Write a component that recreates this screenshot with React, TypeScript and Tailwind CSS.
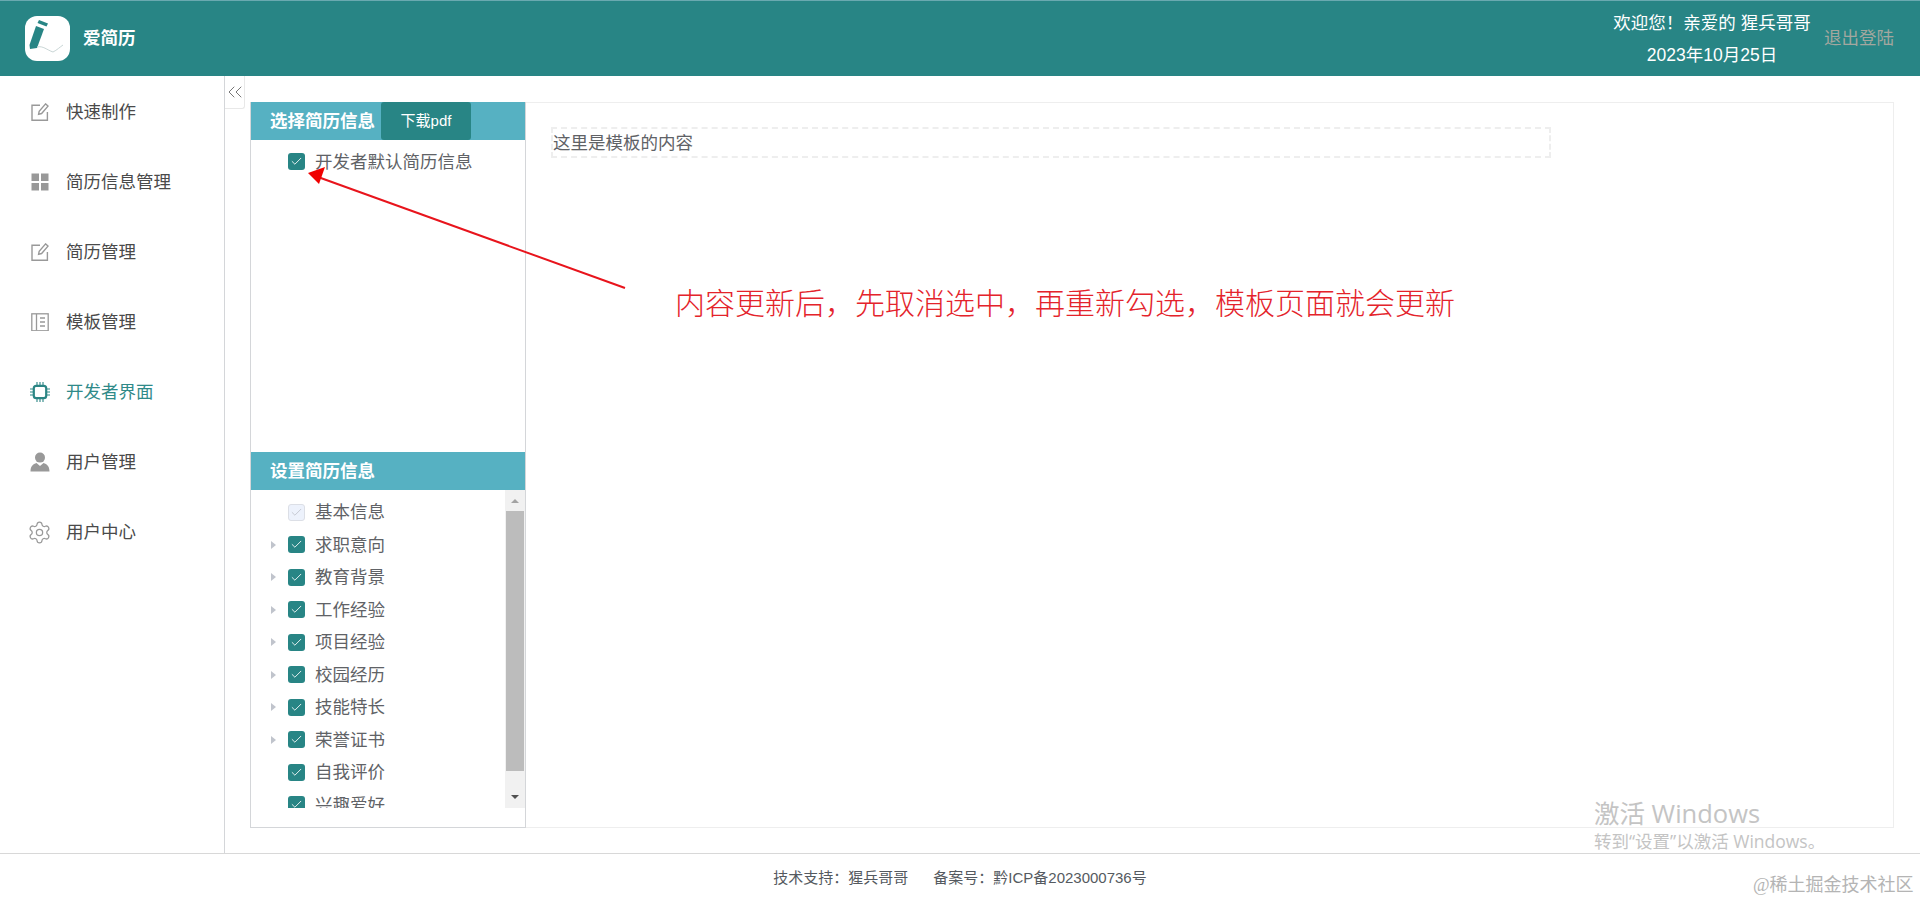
import { Settings, ChevronsLeft, Check } from "lucide-react";

const font = { sans: "font-['Liberation_Sans','Noto_Sans_CJK_SC',sans-serif]" };

const EditIcon = () => (
  <svg width="18" height="18" viewBox="0 0 18 18" fill="none" stroke="#999" strokeWidth="1.4">
    <path d="M9 2.2H1v15h15.4V9" />
    <path d="M7.6 11.2l.6-3L14.6.9l2.4 2.2-6.4 7.4z" />
  </svg>
);

const GridIcon = () => (
  <svg width="18" height="18" viewBox="0 0 18 18" fill="#999">
    <rect x="0.5" y="0.5" width="7.5" height="7.5" />
    <rect x="10" y="0.5" width="7.5" height="7.5" />
    <rect x="0.5" y="10" width="7.5" height="7.5" />
    <rect x="10" y="10" width="7.5" height="7.5" />
  </svg>
);

const BookIcon = () => (
  <svg width="18" height="18" viewBox="0 0 18 18" fill="none" stroke="#999" strokeWidth="1.3">
    <rect x="0.8" y="0.8" width="16.4" height="17" />
    <path d="M5.5 1v16.5M9 5h5M9 9h5M9 13h5" />
  </svg>
);

const UserIcon = () => (
  <svg width="20" height="20" viewBox="0 0 20 20" fill="#999">
    <circle cx="10" cy="5.6" r="5" />
    <path d="M0.5 19.5c0-5 2.5-7.6 6-8.4l3.5 3 3.5-3c3.5.8 6 3.4 6 8.4z" />
  </svg>
);

const ChipIcon = () => (
  <svg width="20" height="20" viewBox="0 0 20 20" fill="none" stroke="#2b8584">
    <rect x="3.8" y="3.8" width="12.4" height="12.4" rx="2.5" strokeWidth="2.2" />
    <path d="M7 0v3M10 0v3M13 0v3M7 17v3M10 17v3M13 17v3M0 7h3M0 10h3M0 13h3M17 7h3M17 10h3M17 13h3" strokeWidth="1.1" />
  </svg>
);

const menu = [
  { label: "快速制作", icon: <EditIcon /> },
  { label: "简历信息管理", icon: <GridIcon /> },
  { label: "简历管理", icon: <EditIcon /> },
  { label: "模板管理", icon: <BookIcon /> },
  { label: "开发者界面", icon: <ChipIcon />, active: true },
  { label: "用户管理", icon: <UserIcon /> },
  { label: "用户中心", icon: <Settings size={25} strokeWidth={1.2} color="#999" /> },
];

const tree = [
  { label: "基本信息", disabled: true },
  { label: "求职意向", arrow: true },
  { label: "教育背景", arrow: true },
  { label: "工作经验", arrow: true },
  { label: "项目经验", arrow: true },
  { label: "校园经历", arrow: true },
  { label: "技能特长", arrow: true },
  { label: "荣誉证书", arrow: true },
  { label: "自我评价" },
  { label: "兴趣爱好" },
];

const CheckBox = ({ disabled = false }: { disabled?: boolean }) => (
  <span
    className={
      disabled
        ? "flex h-[17px] w-[17px] shrink-0 items-center justify-center rounded-[3px] border border-[#dcdfe6] bg-[#edf2fc]"
        : "flex h-[17px] w-[17px] shrink-0 items-center justify-center rounded-[3px] bg-[#288585]"
    }
  >
    <Check size={13} strokeWidth={1.6} color={disabled ? "#c0c4cc" : "#fff"} />
  </span>
);

export default function App() {
  return (
    <div className={`relative flex h-[902px] w-[1920px] flex-col overflow-hidden bg-white ${font.sans}`}>
      <header className="flex h-[76px] shrink-0 items-center border-t border-[#6aa9b0] bg-[#288585] pl-[25px] pr-[26px]">
        <div className="flex h-[45px] w-[45px] items-center justify-center rounded-xl bg-white">
          <svg width="45" height="45" viewBox="0 0 45 45" fill="none">
            <path d="M14 4l9 3.5-1.5 3-9-3.5z" fill="#288585" />
            <path d="M11 10l8 3-7 19-7 1-.5-4z" fill="#288585" />
            <path d="M12 31c6-1.5 10 3 16 5 4-2 7-5 10-7" stroke="#c9d6d6" strokeWidth="1" />
          </svg>
        </div>
        <span className="ml-[13px] text-[17.5px] font-bold text-white">爱简历</span>
        <div className="ml-auto flex w-[198px] flex-col items-center text-[17.5px] leading-[32px] text-white">
          <span className="whitespace-nowrap">欢迎您！亲爱的 猩兵哥哥</span>
          <span>2023年10月25日</span>
        </div>
        <span className="ml-[13px] text-[17.5px] text-[#a3a79f]">退出登陆</span>
      </header>

      <div className="flex min-h-0 flex-1">
        <aside className="w-[225px] shrink-0 border-r border-[#d4d6d9] pt-[1px]">
          {menu.map((m) => (
            <div key={m.label} className="flex h-[70px] items-center">
              <span className="flex w-[66px] justify-center pl-[13px]">{m.icon}</span>
              <span className={m.active ? "text-[17.5px] text-[#2f8a89]" : "text-[17.5px] text-[#4a4a4a]"}>
                {m.label}
              </span>
            </div>
          ))}
        </aside>

        <main className="flex min-w-0 flex-1">
          <div className="flex h-[33px] w-[20px] shrink-0 items-center justify-center rounded-br-[3px] border-r border-b border-[#e8e8e8]">
            <ChevronsLeft size={24} strokeWidth={1} color="#777" className="shrink-0" />
          </div>

          <div className="flex flex-1 items-start pt-[26px] pl-[5px] pr-[26px]">
            <section className="flex h-[726px] w-[276px] shrink-0 flex-col border-x border-b border-[#d4d6d9]">
              <div className="flex h-[38px] shrink-0 items-center bg-[#56b1c2] pl-[19px]">
                <span className="text-[17.5px] font-bold text-white">选择简历信息</span>
                <span className="ml-[6px] flex h-full w-[90px] items-center justify-center rounded-[3px] bg-[#288585] text-[15px] text-white">
                  下载pdf
                </span>
              </div>
              <div className="flex h-[312px] shrink-0 items-start pt-[13px] pl-[37px]">
                <CheckBox />
                <span className="ml-[10px] text-[17.5px] leading-[18px] text-[#606266]">开发者默认简历信息</span>
              </div>

              <div className="flex h-[38px] shrink-0 items-center bg-[#56b1c2] pl-[19px]">
                <span className="text-[17.5px] font-bold text-white">设置简历信息</span>
              </div>
              <div className="flex h-[318px] shrink-0 overflow-hidden">
                <div className="min-w-0 flex-1 overflow-hidden pt-[6px]">
                  {tree.map((t) => (
                    <div key={t.label} className="flex h-[32.5px] items-center pl-5">
                      <span className="flex w-[17px] shrink-0">
                        {t.arrow && (
                          <span className="h-0 w-0 border-y-[4px] border-l-[5px] border-y-transparent border-l-[#c0c4cc]" />
                        )}
                      </span>
                      <CheckBox disabled={t.disabled} />
                      <span className="ml-[10px] text-[17.5px] text-[#606266]">{t.label}</span>
                    </div>
                  ))}
                </div>
                <div className="flex w-[20px] shrink-0 flex-col items-center bg-[#f1f1f1] px-[1px]">
                  <div className="flex h-[21px] w-full shrink-0 items-center justify-center">
                    <span className="h-0 w-0 border-x-[4px] border-b-[4px] border-x-transparent border-b-[#a3a3a3]" />
                  </div>
                  <div className="h-[260px] w-full shrink-0 bg-[#bcbcbc]" />
                  <div className="flex flex-1 w-full items-end justify-center pb-[9px]">
                    <span className="h-0 w-0 border-x-[4px] border-t-[4px] border-x-transparent border-t-[#505050]" />
                  </div>
                </div>
              </div>
            </section>

            <section className="h-[726px] min-w-0 flex-1 border border-l-0 border-[#eeeeee] pt-[24px] pl-[25px]">
              <div className="flex h-[31px] w-[1000px] items-center border-2 border-dashed border-[#eeeeee] pt-[1px] text-[17.5px] text-[#606266]">
                这里是模板的内容
              </div>
            </section>
          </div>
        </main>
      </div>

      <footer className="flex h-[49px] shrink-0 items-center justify-center border-t border-[#d8d8d8] text-[15px] text-[#555a60]">
        <span>技术支持：猩兵哥哥</span>
        <span className="ml-[25px]">备案号：黔ICP备2023000736号</span>
      </footer>

      {/* red annotation pasted over the screenshot */}
      <svg className="absolute top-0 left-0" width="700" height="340" viewBox="0 0 700 340" fill="none">
        <path d="M625 288L318 177" stroke="#e8141c" strokeWidth="2" />
        <path d="M308 173l17-6-6 17z" fill="#f00000" />
      </svg>
      <span className="absolute top-[283px] left-[675px] whitespace-nowrap text-[30px] leading-[36px] font-light text-[#e4232b] font-['Noto_Sans_CJK_SC',serif]">
        内容更新后，先取消选中，再重新勾选，模板页面就会更新
      </span>

      {/* windows watermark */}
      <div className="absolute top-[797px] left-[1594px] flex flex-col font-['Open_Sans','Noto_Sans_CJK_SC',sans-serif] text-[#c4c4c4]">
        <span className="text-[25.5px] leading-[33px]">激活 Windows</span>
        <span className="text-[17.5px] leading-[22px]">转到“设置”以激活 Windows。</span>
      </div>
      <span className="absolute top-[873px] left-[1753px] whitespace-nowrap text-lg leading-[24px] text-[#b4b4b4] font-['Liberation_Serif','Noto_Sans_CJK_SC',serif]">
        @稀土掘金技术社区
      </span>
    </div>
  );
}
